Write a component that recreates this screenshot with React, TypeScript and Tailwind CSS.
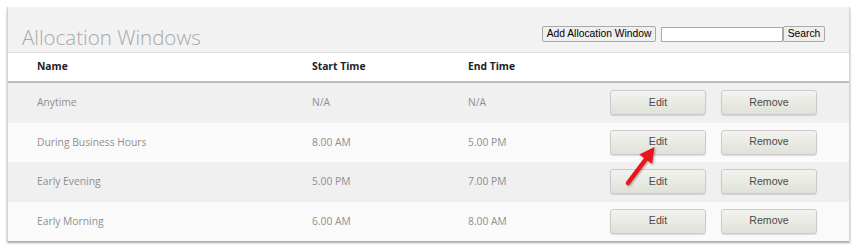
import React from "react";

const rows = [
  { name: "Anytime", start: "N/A", end: "N/A" },
  { name: "During Business Hours", start: "8.00 AM", end: "5.00 PM" },
  { name: "Early Evening", start: "5.00 PM", end: "7.00 PM" },
  { name: "Early Morning", start: "6.00 AM", end: "8.00 AM" },
];

function RowButton({ label }: { label: string }) {
  return (
    <button className="w-[96px] h-[25px] rounded-[3px] border border-[#cfc9cc] bg-gradient-to-b from-[#f3f3ef] to-[#dfe2d8] text-[10.6px] text-[#4a4a4a] shadow-[0_1px_1px_rgba(0,0,0,0.12)] [font-family:'Liberation_Sans',Arial,sans-serif]">
      {label}
    </button>
  );
}

export default function App() {
  return (
    <div className="w-[855px] h-[250px] bg-white pt-[7px] pl-[7px] relative [font-family:'Open_Sans',sans-serif]">
      <div className="w-[843px] border-l border-r border-[#d4d4d4] shadow-[0_2px_2px_rgba(0,0,0,0.35)]">
        <div className="h-[46px] bg-[#f2f2f2] border-b border-[#dedede] flex items-end justify-between pl-[14px] pr-[24px]">
          <div className="text-[20.5px] font-light text-[#a8a8a8] leading-none pb-[5px]">Allocation Windows</div>
          <div className="flex items-center pb-[10px] [font-family:'Liberation_Sans',Arial,sans-serif] text-[10.3px] text-black">
            <button className="h-[16px] w-[114px] border border-[#a9a9a9] bg-[#efefef] rounded-[2px] leading-none">Add Allocation Window</button>
            <input className="ml-[5px] w-[122px] h-[15px] border border-[#a9a9a9] bg-white" />
            <button className="h-[16px] w-[42px] border border-[#a9a9a9] bg-[#efefef] rounded-[2px] leading-none">Search</button>
          </div>
        </div>
        <div className="h-[30px] bg-white border-b-2 border-[#bdbdbd] flex items-center text-[10.3px] font-bold text-[#222]">
          <div className="w-[304px] pl-[29px]">Name</div>
          <div className="w-[156px]">Start Time</div>
          <div className="w-[142px]">End Time</div>
        </div>
        {rows.map((r, i) => (
          <div
            key={r.name}
            className={`h-[39.5px] flex items-center text-[10.3px] text-[#8f8f8f] ${i % 2 === 0 ? "bg-[#f0f0f0]" : "bg-[#fafafa]"}`}
          >
            <div className="w-[304px] pl-[29px]">{r.name}</div>
            <div className="w-[156px]">{r.start}</div>
            <div className="w-[142px]">{r.end}</div>
            <div className="flex gap-[15px]">
              <RowButton label="Edit" />
              <RowButton label="Remove" />
            </div>
          </div>
        ))}
      </div>
      <svg className="absolute left-[620px] top-[143px]" width="45" height="48" viewBox="0 0 45 48">
        <defs>
          <filter id="s" x="-20%" y="-20%" width="140%" height="140%">
            <feDropShadow dx="1" dy="1" stdDeviation="0.8" floodColor="#000" floodOpacity="0.35" />
          </filter>
        </defs>
        <g filter="url(#s)">
          <line x1="8" y1="40" x2="26" y2="16" stroke="#e8161c" strokeWidth="4.5" strokeLinecap="round" />
          <polygon points="34.5,4 19.3,11.4 32.1,21" fill="#e8161c" />
        </g>
      </svg>
    </div>
  );
}
